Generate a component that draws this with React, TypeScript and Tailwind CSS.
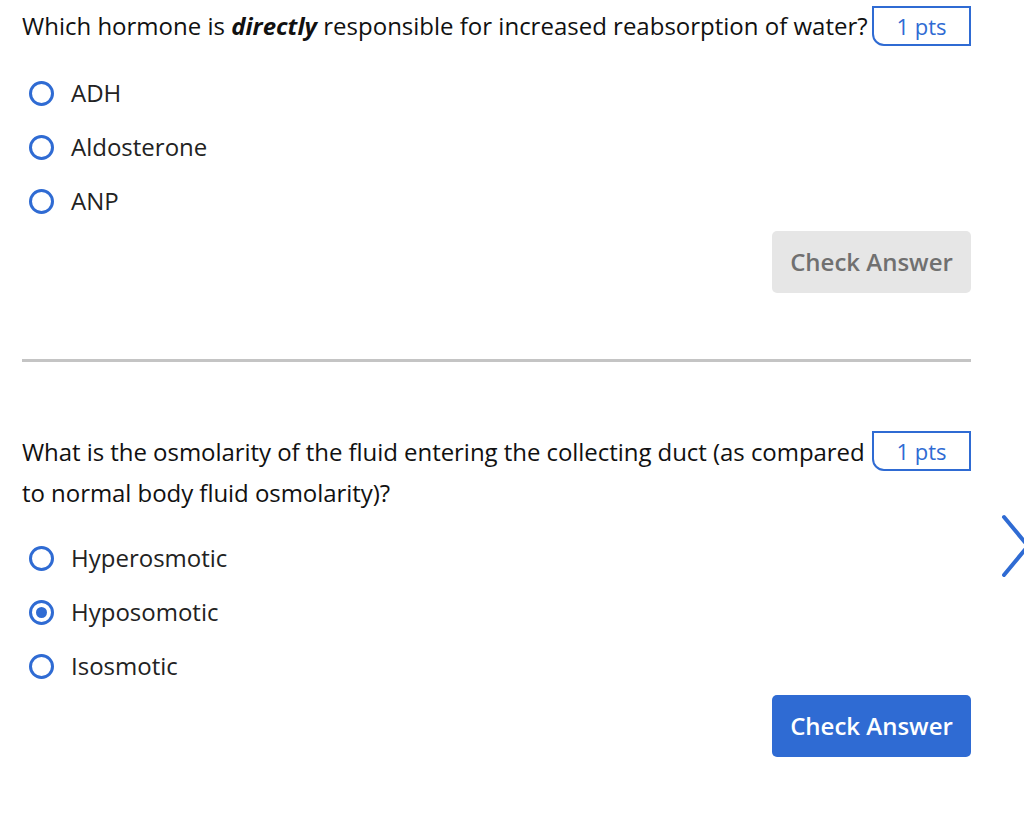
import React from "react";

const Radio = ({ checked }: { checked?: boolean }) => (
  <span className="flex h-[25px] w-[25px] shrink-0 items-center justify-center rounded-full border-[3px] border-[#2f6bd3]">
    {checked && <span className="h-[11px] w-[11px] rounded-full bg-[#2f6bd3]" />}
  </span>
);

const Option = ({ label, checked }: { label: string; checked?: boolean }) => (
  <div className="flex h-[54px] items-center gap-[17px] pl-[7px]">
    <Radio checked={checked} />
    <span className="text-[24px] text-[#222]">{label}</span>
  </div>
);

const Pts = () => (
  <span className="float-right flex h-[40px] w-[99px] items-center justify-center rounded-bl-[12px] border-2 border-[#2f6bd3] bg-white text-[22px] text-[#2f6bd3]">
    1 pts
  </span>
);

export default function App() {
  return (
    <div
      className="relative min-h-[822px] w-[1024px] overflow-hidden bg-white"
      style={{ fontFamily: '"Open Sans", sans-serif' }}
    >
      <div className="w-[971px] pl-[22px]">
        <div className="pt-[6px]">
          <Pts />
          <p className="text-[24px] leading-[40px] text-[#111]">
            Which hormone is <b className="font-bold italic">directly</b> responsible for increased reabsorption of water?
          </p>
        </div>
        <div className="mt-[20px]">
          <Option label="ADH" />
          <Option label="Aldosterone" />
          <Option label="ANP" />
        </div>
        <div className="mt-[3px] flex justify-end">
          <button className="h-[62px] w-[199px] rounded-[5px] bg-[#e6e6e6] text-[24px] font-semibold text-[#707070]">
            Check Answer
          </button>
        </div>
        <div className="mt-[66px] h-[3px] bg-[#c4c4c4]" />
        <div className="mt-[69px]">
          <Pts />
          <p className="text-[24px] leading-[41px] tracking-[-0.05px] text-[#111]">
            What is the osmolarity of the fluid entering the collecting duct (as compared to normal body fluid osmolarity)?
          </p>
        </div>
        <div className="mt-[18px]">
          <Option label="Hyperosmotic" />
          <Option label="Hyposomotic" checked />
          <Option label="Isosmotic" />
        </div>
        <div className="mt-[2px] flex justify-end">
          <button className="h-[62px] w-[199px] rounded-[5px] bg-[#2f6bd3] text-[24px] font-semibold text-white">
            Check Answer
          </button>
        </div>
      </div>
      <svg className="absolute left-[1000px] top-[514px]" width="30" height="64" viewBox="0 0 30 64" fill="none">
        <path d="M4 3 L28 32 L4 61" stroke="#2f6bd3" strokeWidth="4" strokeLinecap="round" strokeLinejoin="round" />
      </svg>
    </div>
  );
}
